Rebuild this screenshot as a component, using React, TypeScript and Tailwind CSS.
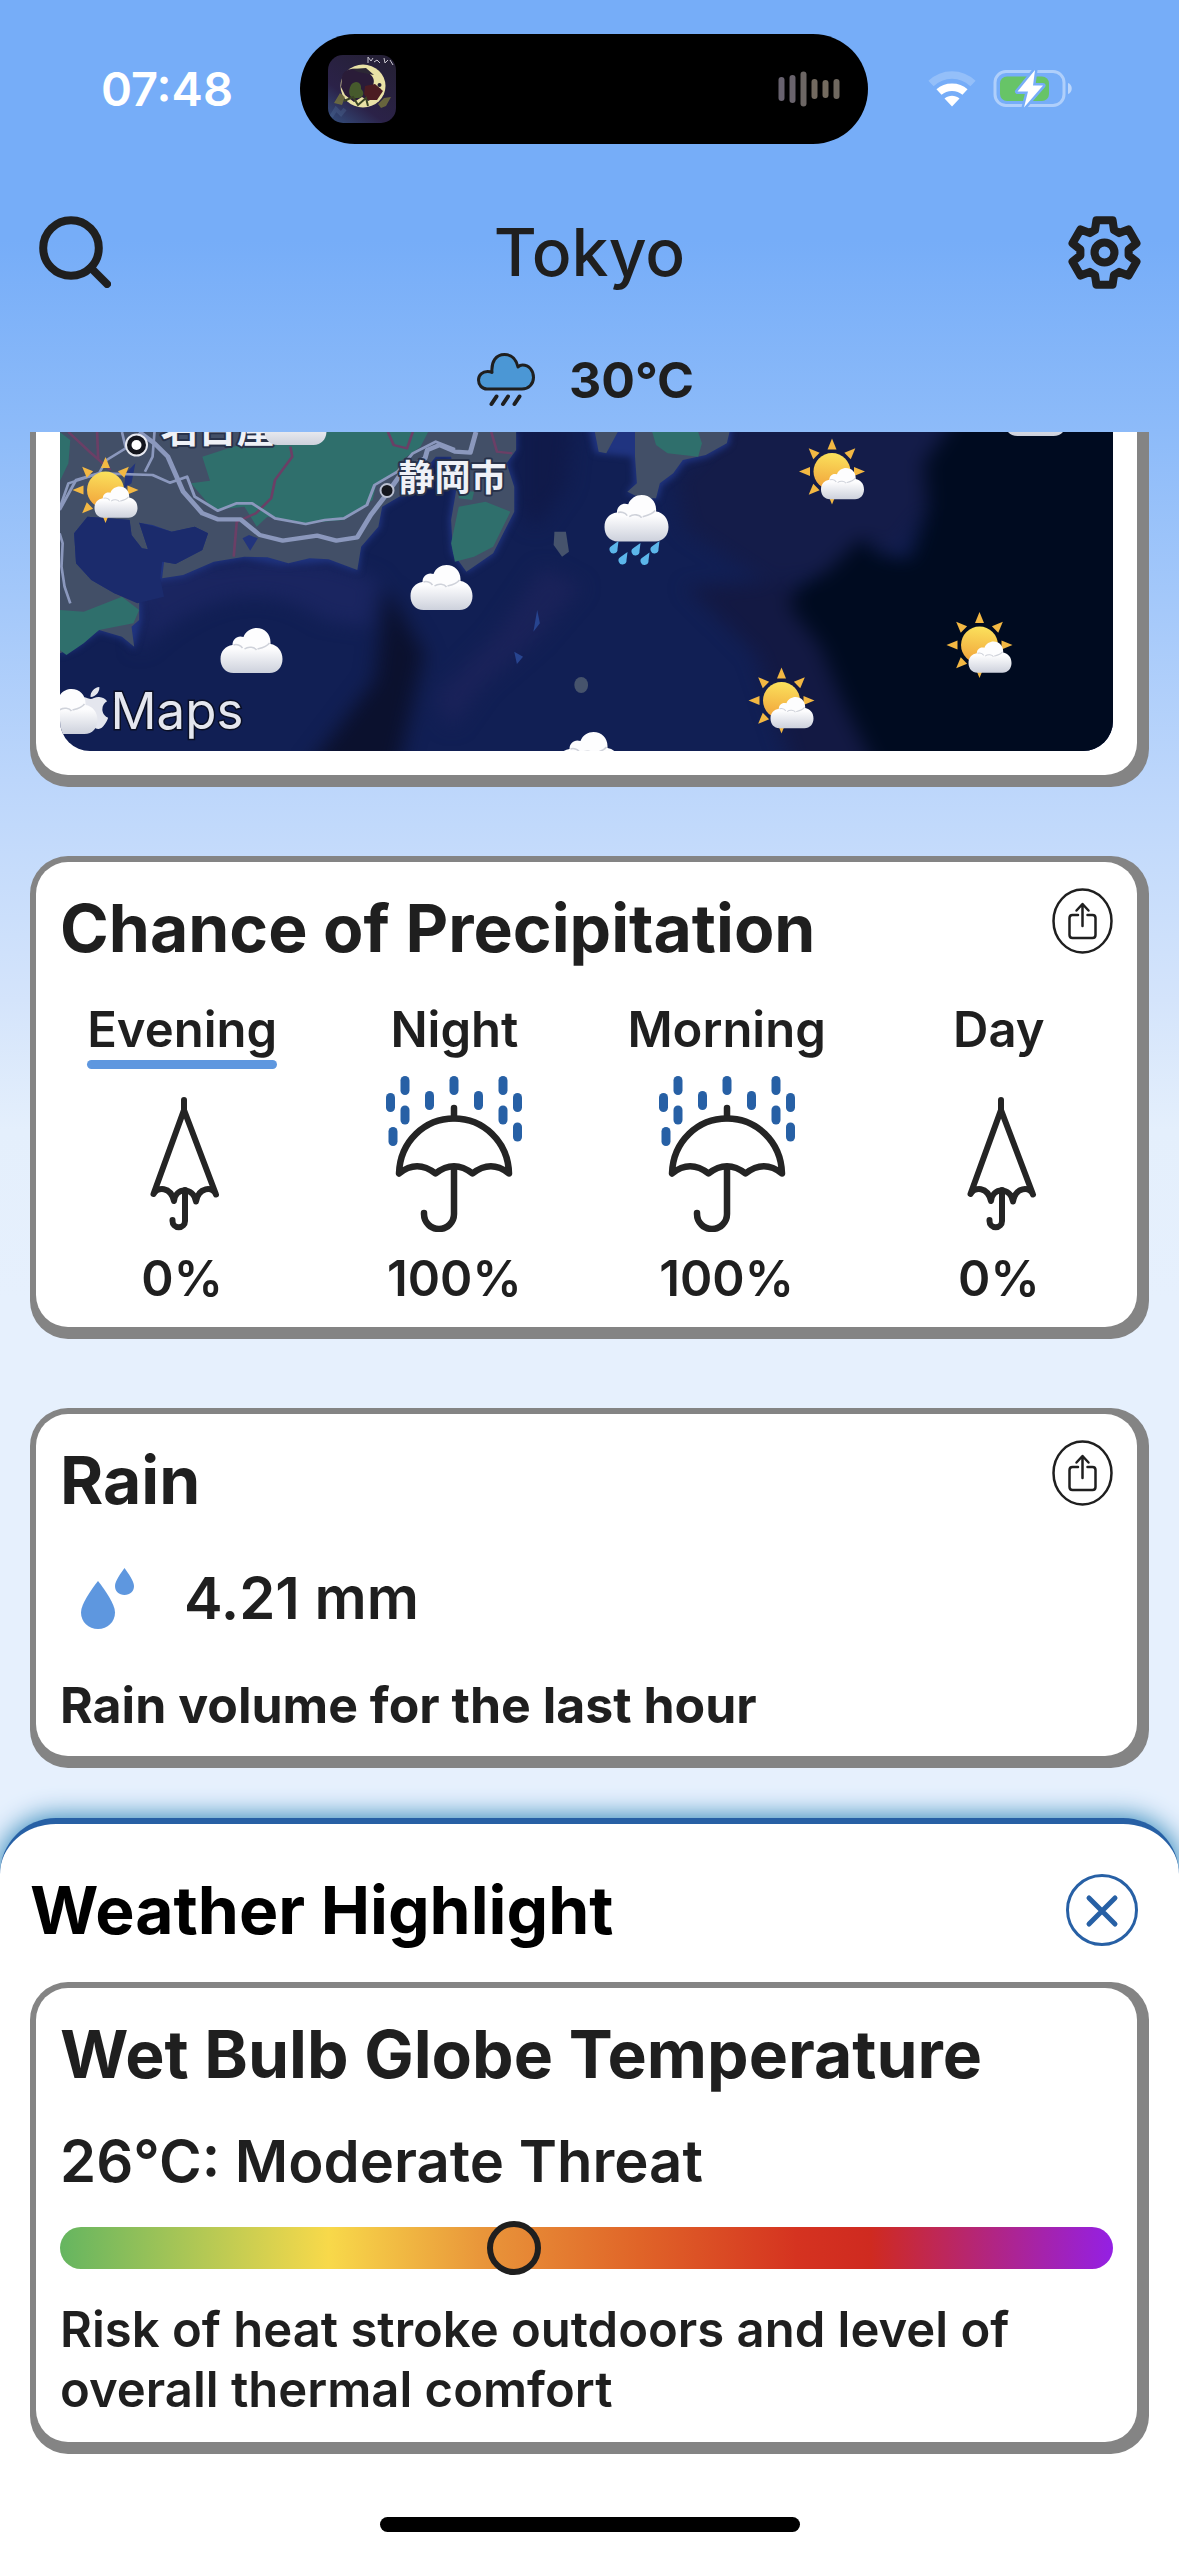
import type { ReactNode } from "react";
import { FaApple } from "react-icons/fa";

function SearchIcon() {
  return (
    <svg className="size-[72px]" viewBox="0 0 72 72" fill="none" stroke="#1f1f1f" strokeWidth="8" strokeLinecap="round">
      <circle cx="32" cy="32" r="27.8" />
      <path d="M52 52L68 68" />
    </svg>
  );
}

const gearPoints = [0, 60, 120, 180, 240, 300]
  .flatMap((a) => [
    [a - 23, 24],
    [a - 14, 32.8],
    [a + 14, 32.8],
    [a + 23, 24],
  ])
  .map(([deg, r]) => {
    const t = ((deg - 90) * Math.PI) / 180;
    return `${(36 + r * Math.cos(t)).toFixed(2)},${(36 + r * Math.sin(t)).toFixed(2)}`;
  })
  .join(" ");

function GearIcon() {
  return (
    <svg className="size-[73px]" viewBox="0 0 72 72" fill="none" stroke="#1f1f1f" strokeWidth="8" strokeLinejoin="round">
      <polygon points={gearPoints} />
      <circle cx="36" cy="36" r="9.8" />
    </svg>
  );
}

function RainCloudIcon() {
  return (
    <svg className="h-[54px] w-[58px]" viewBox="0 0 58 54" fill="none" stroke="#1f1f1f" strokeWidth="3" strokeLinecap="round" strokeLinejoin="round">
      <path
        fill="#4b97d5"
        d="M10 36C5 36 1.5 32 1.5 27C1.5 22 5.500 18.500 10.500 18.500C12 18.500 13.500 18.500 15 19.500C14 8.500 19 1.500 27.500 1.500C35 1.500 39.500 7 41 14C42 13 43.500 12 45.500 12C52 12 56.500 17.500 56.500 24.500C56.500 31 51.500 36 45 36Z"
      />
      <path strokeWidth="4" d="M19.500 43.500L14.500 51M31 43.500L26 51M42.500 43.500L37.500 51" />
    </svg>
  );
}

function AlbumArt() {
  return (
    <svg className="size-[68px] rounded-[15px]" viewBox="0 0 68 68" aria-label="Now playing artwork">
      <defs>
        <linearGradient id="night" x1="0" y1="1" x2="0.7" y2="0">
          <stop offset="0" stopColor="#34507f" />
          <stop offset="0.4" stopColor="#2b2248" />
          <stop offset="1" stopColor="#252036" />
        </linearGradient>
      </defs>
      <rect width="68" height="68" fill="url(#night)" />
      <ellipse cx="35" cy="31" rx="22.500" ry="21.500" fill="#e9e2a6" />
      <path d="M14 22C16 12 30 12 38 17C46 20 47 26 45 30L53 34L50 41L40 46L34 42L26 47L17 40L13 32Z" fill="#2a1c38" />
      <path d="M37 31L47 29L55 36L49 45L40 45L36 39Z" fill="#4b1c22" />
      <path d="M23 30C28 24 34 28 33 34C38 38 34 44 29 43C22 45 19 38 23 30Z" fill="#465a2c" />
      <path d="M6 48L12 38L17 42L14 50ZM50 49L56 43L63 42L58 51L53 53Z" fill="#77763c" opacity="0.8" />
      <path d="M24 14L38 13L46 20L30 17Z" fill="#2c2735" />
      <path d="M16 46L25 42L30 50L38 43L40 51" fill="none" stroke="#3b4425" strokeWidth="2" />
      <circle cx="51.500" cy="30" r="2" fill="#252036" />
      <path d="M40 8V2L43 6L45 3M46 7L49 5L52 8M56 3L57 8L60 5M62 5L65 10" fill="none" stroke="#c9c6cf" strokeWidth="1" />
      <path d="M3 62L8 54L13 59L17 54" fill="none" stroke="#55759f" strokeWidth="4" opacity="0.3" />
    </svg>
  );
}

function SoundBars() {
  return (
    <svg className="h-[36px] w-[62px]" viewBox="0 0 62 36">
      <g strokeWidth="6" strokeLinecap="round">
        <path stroke="#68626f" d="M3.500 9V27" />
        <path stroke="#69636c" d="M14.500 7V29" />
        <path stroke="#6c6664" d="M25.500 3.500V32.500" />
        <path stroke="#72695f" d="M36.500 11V25" />
        <path stroke="#746b5f" d="M47.500 12V24" />
        <path stroke="#6f685f" d="M58.500 11V25" />
      </g>
    </svg>
  );
}

function WifiIcon() {
  return (
    <svg className="h-[36px] w-[48px]" viewBox="0 0 48 36" fill="none">
      <path d="M3 12.500C15 1 33 1 45 12.500" stroke="#fff" strokeWidth="7.500" opacity="0.22" />
      <path d="M11 21C18 14.500 30 14.500 37 21" stroke="#fff" strokeWidth="7.500" />
      <path d="M16.500 27.500C21 23.800 27 23.800 31.500 27.500L24 35.500Z" fill="#fff" />
    </svg>
  );
}

function BatteryIcon() {
  return (
    <svg className="h-[40px] w-[80px]" viewBox="0 0 80 40">
      <rect x="2" y="2.500" width="69" height="34" rx="11" fill="none" stroke="#fff" strokeOpacity="0.42" strokeWidth="3" />
      <path d="M75 14C80 15.500 80 23.500 75 25Z" fill="#fff" opacity="0.5" />
      <rect x="7" y="7.500" width="49" height="24.500" rx="7" fill="#67c467" />
      <path d="M42 1L24.500 22.500H35L31 38.500L50 16.500H40Z" fill="#fff" stroke="#76adf8" strokeWidth="5" paintOrder="stroke" strokeLinejoin="round" />
    </svg>
  );
}

function ShareButton({ label }: { label: string }) {
  return (
    <button type="button" aria-label={label} className="shrink-0">
      <svg className="h-[66px] w-[61px]" viewBox="0 0 61 66" fill="none" stroke="#1f1f1f" strokeWidth="2.500" strokeLinecap="round" strokeLinejoin="round">
        <ellipse cx="30.500" cy="33" rx="29" ry="31.500" />
        <path d="M26 27H20.500C18.500 27 17.500 28 17.500 30V47C17.500 49 18.500 50 20.500 50H40.500C42.500 50 43.500 49 43.500 47V30C43.500 28 42.500 27 40.500 27H35.500" />
        <path d="M30.500 38V16.500M24.500 22.500L30.500 16L36.500 22.500" />
      </svg>
    </button>
  );
}

function ClosedUmbrella() {
  return (
    <svg className="h-[136px] w-[76px]" viewBox="-4.500 0 76 136" fill="none" stroke="#242424" strokeWidth="6" strokeLinecap="round" strokeLinejoin="round">
      <path d="M35.500 4V14" />
      <path d="M35.500 14L5 98C9 91 22 90 25.500 105C27 91 45 91 47.500 105.500C50 91 64 90 67.500 98.500Z" />
      <path d="M36.500 94V125A6.200 6.200 0 0 1 24 125V124" />
    </svg>
  );
}

const rainDrops = [
  [14.5, 0], [63.5, 0], [112.5, 0], [39, 15], [88, 15], [0, 17],
  [127, 17], [14.5, 29.5], [112.5, 29.5], [2.5, 51], [127, 46.5],
];

function OpenUmbrella() {
  return (
    <svg className="h-[156px] w-[136px]" viewBox="0 0 136 156" fill="none" stroke="#242424" strokeWidth="6.500" strokeLinecap="round" strokeLinejoin="round">
      {rainDrops.map(([x, y]) => (
        <rect key={`${x}-${y}`} x={x} y={y} width="9" height="19" rx="4.500" fill="#2760a5" stroke="none" />
      ))}
      <path d="M68 32V42" />
      <path d="M13 97.500C14 65 39 42.500 68 42.500C97 42.500 122 65 123 97.500Q105 83 86.500 97.500Q68 83 49.500 97.500Q31 83 13 97.500Z" />
      <path d="M68 91V138A15 15 0 0 1 38 138V137" />
    </svg>
  );
}

function DropsIcon() {
  return (
    <svg className="h-[61px] w-[53px]" viewBox="0 0 53 61" fill="#5e97df">
      <path d="M17 13C24 22 34 36 34 44.500C34 54 26.500 61 17 61C7.500 61 0 54 0 44.500C0 36 10 22 17 13Z" />
      <path d="M43.500 0C47 5 53 13 53 18C53 23.500 49 27 43.500 27C38 27 34 23.500 34 18C34 13 40 5 43.500 0Z" />
    </svg>
  );
}

function MapCloud({ x, y, w = 62 }: { x: number; y: number; w?: number }) {
  return (
    <g transform={`translate(${x} ${y}) scale(${w / 62})`}>
      <path
        fill="url(#cloud)"
        d="M13 45C5 45 0 39 0 31C0 23 5 18 12 17C12 11 17 7 23 9C25 3 31 0 36 0C44 0 50 6 50 14V16C57 17 62 23 62 31C62 39 57 45 49 45Z"
      />
      <path d="M13 17C16 16 20 17 22 20M24 21C28 18 34 19 36 22M37 21C41 20 46 19 49 15" fill="none" stroke="#cfd2da" strokeWidth="1.500" />
    </g>
  );
}

function MapSun({ x, y }: { x: number; y: number }) {
  return (
    <g transform={`translate(${x} ${y})`}>
      {[0, 45, 90, 180, 225, 270, 315].map((a) => (
        <path key={a} transform={`rotate(${a})`} d="M-4.500 -22L0 -33L4.500 -22Z" fill="#f3b843" />
      ))}
      <circle r="18.500" fill="url(#sun)" />
      <MapCloud x={-11} y={-3.5} w={43} />
    </g>
  );
}

function WeatherMap() {
  return (
    <svg
      className="h-[319px] w-full rounded-b-[30px]"
      viewBox="60 432 1054 319"
      preserveAspectRatio="xMidYMid slice"
      role="img"
      aria-label="Weather map"
      fontFamily='Inter, "Noto Sans CJK JP", sans-serif'
    >
      <defs>
        <linearGradient id="cloud" x1="0" y1="0" x2="0" y2="1">
          <stop offset="0.450" stopColor="#fdfdfe" />
          <stop offset="1" stopColor="#cdd1dc" />
        </linearGradient>
        <linearGradient id="sun" x1="0.500" y1="0" x2="0.400" y2="1">
          <stop offset="0" stopColor="#fbe15c" />
          <stop offset="1" stopColor="#f1a23a" />
        </linearGradient>
        <filter id="depth" x="-20%" y="-20%" width="140%" height="140%" colorInterpolationFilters="sRGB">
          <feGaussianBlur stdDeviation="26" />
        </filter>
        <filter id="shore" x="-20%" y="-20%" width="140%" height="140%" colorInterpolationFilters="sRGB">
          <feGaussianBlur stdDeviation="9" />
        </filter>
      </defs>
      <rect x="60" y="432" width="1054" height="319" fill="#111f54" />

      <g transform="translate(0 420) scale(0.3827 0.3333)">
        <g filter="url(#depth)">
          <path d="M190 300L350 280L560 320L520 470L380 560L240 500L180 400Z" fill="#1d2c6d" />
          <path d="M380 500C540 400 760 400 900 440L990 480L970 620L850 600C700 480 520 520 360 700Z" fill="#1a2560" />
          <path d="M1010 500L1110 700L1080 850L1040 1050H800L980 780Z" fill="#0b112e" />
          <path d="M1360 0L1500 0L1480 200L1400 330L1360 260Z" fill="#101a4a" />
          <path d="M1420 440L1520 500L1400 660L1260 800L1180 930L1140 830L1300 640Z" fill="#1a2259" />
        </g>
        <path
          filter="url(#shore)"
          fill="#203480"
          d="M157 36H1352V90L1330 130L1350 200L1348 280L1293 405L1220 460L1180 400L1174 300L1187 200L1178 116H1144L1060 223L1003 263L995 323L948 383L938 456L860 426L738 436L640 416L560 431L480 471L418 480L300 530L370 545L372 600L352 688L320 656L260 636L200 686L157 706Z"
        />
        <path
          fill="#424f67"
          d="M157 36H1350V90L1325 130L1345 200V275L1290 400L1220 455L1185 400L1180 300L1195 200L1180 110H1140L1060 220L1000 260L990 320L945 380L935 450L900 435L860 418L810 415L755 430L700 412L640 410L560 425L480 465L425 475L430 425L460 432L530 390L545 340L510 320L450 335L400 315L365 308L388 388L372 385L345 345L340 300L230 290L195 340L200 430L240 480L300 520L365 545V600L345 620L352 680L320 650L260 630L200 680L157 700Z"
        />
        <path d="M230 290L340 300L345 345L372 385L388 388L365 308L400 318L450 335L510 320L545 340L530 390L460 432L425 425L420 475L430 530L360 550L300 520L240 480L200 430L195 340Z" fill="#1b2b6c" />
        <path d="M635 355L652 345L675 355L655 392ZM330 160L355 130L345 190L325 205Z" fill="#22347c" />
        <g fill="#2f6f6c">
          <path d="M610 80L700 60L860 36H1120L1100 80L1040 130V160L985 190L975 240L900 300L800 310L700 290L672 320L640 260L560 270L500 190L550 182L530 110Z" />
          <path d="M157 570L220 575L320 530L365 570L350 610L260 630L220 670L175 705L157 690Z" />
          <path d="M1200 260L1270 245L1335 275L1290 380L1240 410L1190 425L1180 370ZM1200 210L1240 215L1235 240L1200 235Z" />
          <path d="M157 36L185 60L180 130L157 185Z" />
        </g>
        <path d="M760 80L765 110L720 180L710 235L670 280L620 305L612 410M180 36L240 100L290 150M255 36L258 120M1015 36L1030 75L1065 85L1080 36M1285 36L1300 95L1340 100" fill="none" stroke="#6b3f66" strokeWidth="7" />
        <g fill="none" stroke="#8b98bd" strokeLinejoin="round">
          <path strokeWidth="13" d="M365 36L405 70L440 110L480 215L530 280L570 298H630L680 345L740 362L830 347L880 362L935 352L970 285L1010 225L1050 160L1112 115L1118 90L1150 75L1190 95L1230 98L1245 36" />
          <path strokeWidth="8" d="M157 270L200 180L260 160L400 165L445 188L490 170L510 230L570 272L620 250H660L720 295L800 312L850 300L900 295L960 255L980 195L1040 155L1080 100L1140 65L1190 88" />
          <path strokeWidth="7" d="M157 265L180 190L260 160L280 120L330 85L320 36M405 36L400 110L380 155M157 340L165 370L162 440L170 500L185 550" />
        </g>
        <path d="M1450 335L1480 335L1488 395L1470 410L1448 375Z" fill="#46536c" />
        <ellipse cx="1520" cy="795" rx="18" ry="24" fill="#46536c" />
        <path d="M1405 570L1412 610L1395 635ZM1345 695L1368 710L1352 732Z" fill="#27448f" />
      </g>

      <g transform="translate(580 420) scale(0.3827 0.3333)">
        <g filter="url(#depth)">
          <path d="M400 0H990L900 130L910 260L820 400L740 360L620 480L480 480L280 330L250 180Z" fill="#141c49" />
          <path d="M280 500L560 480L720 850L800 1050H560L460 700Z" fill="#131943" />
          <path d="M990 -20L900 130L910 260L860 420L780 400L740 350L640 460L570 500L550 560L630 680L690 850L780 1060H1460V-20Z" fill="#000b20" />
        </g>
        <path filter="url(#shore)" fill="#203480" d="M20 0H400L392 75L335 112L275 128L250 168L215 198L205 240L122 222L142 190L137 110L40 100Z" />
        <path fill="#424f67" d="M145 36H392L385 70L330 105L270 120L245 160L210 190L200 235H160L125 215L150 190L145 110ZM40 36H100L70 100L50 95Z" />
        <path fill="#2f6f6c" d="M190 36H310L320 70L310 110L230 100L200 75Z" />
      </g>

      <g fill="#eff1f7" stroke="#28324a" strokeWidth="4" paintOrder="stroke" fontWeight="700" strokeLinejoin="round">
        <text x="161" y="442" fontSize="38">名古屋</text>
        <text x="399" y="491" fontSize="36">静岡市</text>
      </g>
      <circle cx="137" cy="445" r="10.500" fill="#14161d" stroke="#e6e8ef" strokeWidth="2" />
      <circle cx="137" cy="445" r="5" fill="#fff" />
      <circle cx="387.500" cy="490.500" r="6.500" fill="#14161d" stroke="#b9bfd0" strokeWidth="2" />

      <FaApple x="67" y="684" size={48} color="#e4e6ee" />
      <text x="111" y="729" fontSize="51" fill="#e4e6ee" stroke="#0a0f24" strokeWidth="3" paintOrder="stroke">Maps</text>

      <MapCloud x={265} y={400} />
      <MapCloud x={411} y={565} />
      <MapCloud x={221} y={628} />
      <MapCloud x={36} y={689} />
      <MapCloud x={558} y={732} />
      <MapCloud x={1005} y={391} />
      <MapCloud x={605} y={495} w={64} />
      <g fill="#5cb6ea">
        {[[612, 541], [634, 543], [653, 541], [621, 552], [643, 552.5]].map(([x, y]) => (
          <path key={x} d={`M${x + 7} ${y}L${x + 6} ${y + 8}A4 4 0 1 1 ${x} ${y + 5}Z`} />
        ))}
      </g>
      <MapSun x={106} y={490} />
      <MapSun x={832.5} y={471.5} />
      <MapSun x={980} y={645} />
      <MapSun x={782} y={700.5} />
    </svg>
  );
}

function Card({ title, share = false, children }: { title: string; share?: boolean; children: ReactNode }) {
  return (
    <section className="rounded-[38px] bg-[#848484] pt-[6px] pr-[12px] pb-[12px] pl-[6px]">
      <div className="rounded-[32px] bg-white px-[24px] pt-[26px] pb-[20px]">
        <div className="flex items-start justify-between">
          <h2 className="text-[66px] leading-[80px] font-bold whitespace-nowrap">{title}</h2>
          {share && <ShareButton label={`Share ${title}`} />}
        </div>
        {children}
      </div>
    </section>
  );
}

const periods = [
  { name: "Evening", chance: 0, active: true },
  { name: "Night", chance: 100, active: false },
  { name: "Morning", chance: 100, active: false },
  { name: "Day", chance: 0, active: false },
];

const wbgt = { position: 43.1 };

export default function App() {
  return (
    <div className="flex min-h-screen flex-col bg-[#e6f0fd] bg-[linear-gradient(180deg,#76adf8_0px,#76adf8_240px,#8dbbf9_432px,#bcd6fb_780px,#c6dcfb_870px,#d4e4fb_1000px,#e4effc_1130px,#e6f0fd_1300px)] font-[Inter,sans-serif] text-[#1f1f1f]">
      <header className="pb-[22px]">
        <div className="grid grid-cols-[300fr_568fr_311fr] items-center pt-[34px]">
          <time className="pl-[34px] text-center text-[47px] leading-[60px] font-semibold text-white">07:48</time>
          <div className="flex h-[110px] items-center justify-between rounded-full bg-black px-[28px]">
            <AlbumArt />
            <SoundBars />
          </div>
          <div className="flex items-center gap-[17px] pl-[60px]">
            <WifiIcon />
            <BatteryIcon />
          </div>
        </div>
        <div className="mt-[72px] flex h-[72px] items-center justify-between pr-[38px] pl-[39px]">
          <button type="button" aria-label="Search"><SearchIcon /></button>
          <h1 className="text-[66px] leading-[80px] font-medium">Tokyo</h1>
          <button type="button" aria-label="Settings"><GearIcon /></button>
        </div>
        <div className="mt-[62px] flex h-[60px] items-center justify-center gap-[34px] pr-[8px]">
          <RainCloudIcon />
          <span className="text-[50px] leading-[60px] font-bold">30°C</span>
        </div>
      </header>

      <main className="flex flex-col gap-[69px] px-[30px]">
        <section className="rounded-b-[38px] bg-[#848484] pr-[12px] pb-[12px] pl-[6px]">
          <div className="flex rounded-b-[32px] bg-white px-[24px] pb-[24px]">
            <WeatherMap />
          </div>
        </section>

        <Card title="Chance of Precipitation" share>
          <div className="-mr-[22px] -mb-[2px] -ml-[14px] mt-[32px] grid grid-cols-4 text-[49px] leading-[60px] font-semibold">
            {periods.map((p) => (
              <div key={p.name} className="flex flex-col items-center">
                <div className="flex flex-col">
                  {p.name}
                  <span className={p.active ? "h-[9px] rounded-full bg-[#5e97df]" : "h-[9px]"} />
                </div>
                <div className="mt-[7px] flex h-[156px] items-end">
                  {p.chance > 0 ? <OpenUmbrella /> : <ClosedUmbrella />}
                </div>
                <span className="mt-[17px]">{p.chance}%</span>
              </div>
            ))}
          </div>
        </Card>

        <Card title="Rain" share>
          <div className="mt-[42px] flex items-center gap-[50px] pl-[21px]">
            <DropsIcon />
            <span className="text-[58px] leading-[72px] font-semibold">4.21 mm</span>
          </div>
          <p className="mt-[41px] mb-[1px] text-[50px] leading-[60px] font-bold">Rain volume for the last hour</p>
        </Card>
      </main>

      <section className="mt-[50px] grow rounded-t-[56px] border-t-[6px] border-[#2760a5] bg-white px-[30px] pt-[50px] pb-[24px] shadow-[0_0_26px_2px_#2f86b8]">
        <div className="flex items-center justify-between pr-[11px]">
          <h2 className="text-[66px] leading-[72px] font-bold whitespace-nowrap text-black">Weather Highlight</h2>
          <button type="button" aria-label="Close">
            <svg className="size-[72px]" viewBox="0 0 72 72" fill="none" stroke="#2760a5" strokeLinecap="round">
              <circle cx="36" cy="36" r="34.500" strokeWidth="3" />
              <path strokeWidth="5" d="M23 24L49 50M49 24L23 50" />
            </svg>
          </button>
        </div>
        <div className="mt-[36px]">
          <Card title="Wet Bulb Globe Temperature">
            <p className="mt-[31px] text-[58px] leading-[72px] font-semibold">26°C: Moderate Threat</p>
            <div className="relative mt-[30px] h-[42px] rounded-full bg-[linear-gradient(90deg,#65b560_0%,#f8d94a_25.500%,#e9963a_40%,#e06428_55%,#d53320_70%,#cf2a20_77%,#9420e4_100%)]">
              <span
                className="absolute top-1/2 size-[54px] -translate-x-1/2 -translate-y-1/2 rounded-full border-[6px] border-[#1f1f1f]"
                style={{ left: `${wbgt.position}%` }}
              />
            </div>
            <p className="mt-[31px] mb-[2px] text-[49px] leading-[60px] font-semibold">
              Risk of heat stroke outdoors and level of overall thermal comfort
            </p>
          </Card>
        </div>
        <div className="mx-auto mt-[63px] h-[15px] w-[420px] rounded-full bg-black" />
      </section>
    </div>
  );
}
